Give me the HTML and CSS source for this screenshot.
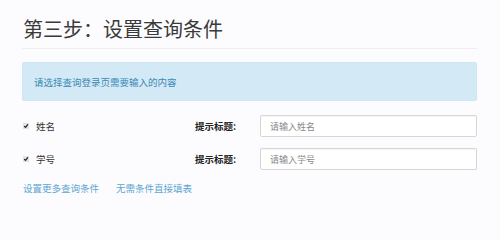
FILE: index.html
```html
<!DOCTYPE html>
<html lang="zh">
<head>
<meta charset="utf-8">
<link rel="stylesheet" href="styles.css">
</head>
<body>
<div class="page">
  <h1 class="page-header">第三步：设置查询条件</h1>
  <div class="alert">请选择查询登录页需要输入的内容</div>
  <div class="rows">
    <div class="row">
      <label class="check"><span class="box"><svg viewBox="0 0 6 6" width="6" height="6"><path d="M1.2 3.1 L2.5 4.4 L4.9 1.4" fill="none" stroke="#222" stroke-width="1.3"/></svg></span>姓名</label>
      <span class="lbl">提示标题:</span>
      <input class="field" type="text" placeholder="请输入姓名">
    </div>
    <div class="row">
      <label class="check"><span class="box"><svg viewBox="0 0 6 6" width="6" height="6"><path d="M1.2 3.1 L2.5 4.4 L4.9 1.4" fill="none" stroke="#222" stroke-width="1.3"/></svg></span>学号</label>
      <span class="lbl">提示标题:</span>
      <input class="field" type="text" placeholder="请输入学号">
    </div>
  </div>
  <div class="links">
    <a href="#">设置更多查询条件</a>
    <a href="#">无需条件直接填表</a>
  </div>
</div>
</body>
</html>
```
FILE: styles.css
```css
* { box-sizing: border-box; }
html, body { margin: 0; background: #fcfcfe; }
body {
  font-family: "Noto Sans CJK SC", "Noto Sans", sans-serif;
  font-size: 9.5px;
  color: #333;
  width: 500px;
  height: 204px;
  overflow: hidden;
}
.page { padding: 0 23px 0 22px; }
.page-header {
  margin: 0;
  padding: 17px 0 7px 1px;
  font-size: 20px;
  line-height: 24px;
  font-weight: 400;
  color: #3a3a3a;
  border-bottom: 1px solid #eeeef1;
}
.alert {
  margin-top: 13px;
  height: 39px;
  padding: 0 11px;
  display: flex;
  align-items: center;
  background: #d4e9f6;
  border: 1px solid #cfe6f3;
  border-radius: 2px;
  color: #3a89b5;
  font-size: 9.5px;
}
.rows {
  margin-top: 14px;
  display: flex;
  flex-direction: column;
  gap: 11px;
}
.row {
  display: grid;
  grid-template-columns: 134px 56px minmax(0, 1fr);
  column-gap: 24px;
  align-items: center;
  height: 22px;
}
.check {
  display: flex;
  align-items: center;
  gap: 7px;
  padding-left: 1px;
  color: #333;
}
.box {
  width: 6px;
  height: 6px;
  background: #e2e2e4;
  display: flex;
}
.box svg { display: block; }
.lbl {
  text-align: right;
  font-weight: 700;
  color: #222;
  white-space: nowrap;
}
.field {
  height: 22px;
  width: 100%;
  min-width: 0;
  border: 1px solid #d6d6d9;
  border-radius: 2px;
  background: #fff;
  padding: 0 9px;
  font-family: inherit;
  font-size: 9px;
  color: #555;
  box-shadow: inset 0 1px 1px rgba(0,0,0,0.04);
  outline: none;
}
.field::placeholder { color: #888; }
.links {
  margin-top: 11px;
  display: flex;
  gap: 17px;
  padding-left: 1px;
  line-height: 14px;
}
.links a {
  color: #5ea6d0;
  text-decoration: none;
  font-size: 9.5px;
}
```
